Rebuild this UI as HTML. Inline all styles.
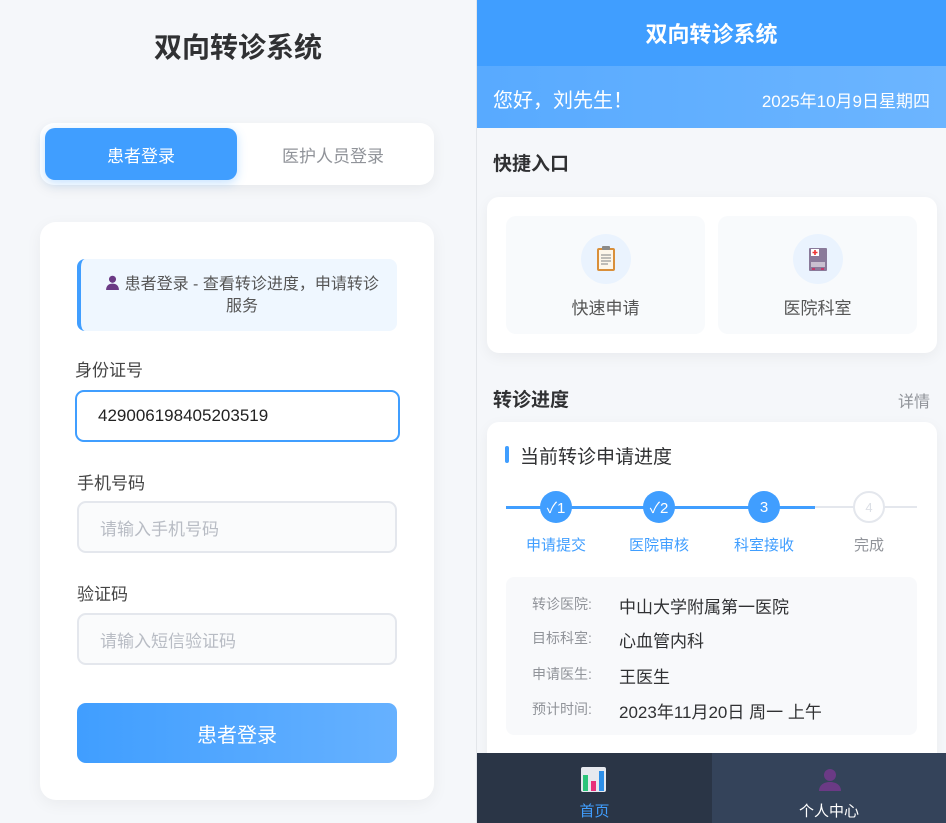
<!DOCTYPE html><html><head><meta charset="utf-8"><style>
*{margin:0;padding:0;box-sizing:border-box}
body{width:946px;height:823px;overflow:hidden;font-family:"Liberation Sans","Noto Sans CJK SC",sans-serif;background:#f5f7fa;position:relative}
.a{position:absolute}
.c{display:flex;align-items:center;justify-content:center}
.inp{position:absolute;left:77px;width:320px;height:52px;border:2px solid #e4e7ed;border-radius:9px;background:#fafbfc;color:#b8bcc4;font-size:17px;padding-left:21px;display:flex;align-items:center}
.lbl{position:absolute;left:75px;font-size:17px;color:#444}
.step{position:absolute;top:491px;width:32px;height:32px;border-radius:50%;background:#409eff;color:#fff;font-size:15px;display:flex;align-items:center;justify-content:center}
.sl{position:absolute;top:534px;width:110px;text-align:center;font-size:15px;color:#409eff}
.rl{position:absolute;left:532px;font-size:14px;color:#909399}
.rv{position:absolute;left:619px;font-size:17px;color:#303133}
</style></head><body>
<div class="a" style="left:0;top:0;width:477px;height:823px;background:#f5f7fa;border-right:1px solid #e3e6ea"></div>
<div class="a" style="left:0;top:26px;width:476px;text-align:center;font-size:28px;font-weight:bold;color:#303133">双向转诊系统</div>
<div class="a" style="left:40px;top:123px;width:394px;height:62px;background:#fff;border-radius:14px;box-shadow:0 4px 14px rgba(0,0,0,.06)"></div>
<div class="a c" style="left:45px;top:128px;width:192px;height:52px;background:#409eff;border-radius:10px;color:#fff;font-size:17px;box-shadow:0 3px 10px rgba(64,158,255,.3)">患者登录</div>
<div class="a c" style="left:237px;top:128px;width:192px;height:52px;color:#909399;font-size:17px">医护人员登录</div>
<div class="a" style="left:40px;top:222px;width:394px;height:578px;background:#fff;border-radius:16px;box-shadow:0 4px 16px rgba(0,0,0,.05)"></div>
<div class="a" style="left:77px;top:259px;width:320px;height:72px;background:#eff7ff;border-left:4px solid #409eff;border-radius:8px;text-align:center;font-size:16px;color:#555;line-height:22px;padding:15px 14px 0 20px">
<svg width="15" height="15" viewBox="0 0 14 14" style="vertical-align:-1px"><circle cx="7" cy="4" r="3.3" fill="#6b3a85"/><path d="M1 14c0-4 2.5-6 6-6s6 2 6 6z" fill="#6b3a85"/></svg> 患者登录 - 查看转诊进度，申请转诊<br>服务</div>
<div class="lbl" style="top:356px">身份证号</div>
<div class="inp" style="left:75px;top:390px;width:325px;border-color:#409eff;background:#fff;color:#222;font-size:17px">429006198405203519</div>
<div class="lbl" style="left:77px;top:469px">手机号码</div>
<div class="inp" style="top:501px">请输入手机号码</div>
<div class="lbl" style="left:77px;top:580px">验证码</div>
<div class="inp" style="top:613px">请输入短信验证码</div>
<div class="a c" style="left:77px;top:703px;width:320px;height:60px;border-radius:9px;background:linear-gradient(90deg,#409eff,#66b1ff);color:#fff;font-size:20px">患者登录</div>

<div class="a c" style="left:477px;top:0;width:469px;height:66px;background:#409eff;color:#fff;font-size:22px;font-weight:bold">双向转诊系统</div>
<div class="a" style="left:477px;top:66px;width:469px;height:62px;background:linear-gradient(90deg,#58aaff,#6cb5ff)"></div>
<div class="a" style="left:493px;top:84px;color:#fff;font-size:20px">您好，刘先生！</div>
<div class="a" style="right:16px;top:87px;color:#fff;font-size:17px">2025年10月9日星期四</div>
<div class="a" style="left:493px;top:149px;font-size:19px;font-weight:bold;color:#303133">快捷入口</div>
<div class="a" style="left:487px;top:197px;width:450px;height:156px;background:#fff;border-radius:12px;box-shadow:0 4px 14px rgba(0,0,0,.05)"></div>
<div class="a" style="left:506px;top:216px;width:199px;height:118px;background:#f8fafc;border-radius:10px"></div>
<div class="a" style="left:718px;top:216px;width:199px;height:118px;background:#f8fafc;border-radius:10px"></div>
<div class="a c" style="left:581px;top:234px;width:50px;height:50px;border-radius:50%;background:#eaf3fe"><svg width="20" height="26" viewBox="0 0 20 26"><rect x="1" y="2" width="18" height="23" rx="2" fill="#d98f3a"/><rect x="3" y="4" width="14" height="19" fill="#fdf6ea"/><rect x="6" y="0" width="8" height="4" rx="1" fill="#8a8a8a"/><path d="M5 9h10M5 12h10M5 15h10M5 18h7" stroke="#999" stroke-width="1.2"/></svg></div>
<div class="a c" style="left:793px;top:234px;width:50px;height:50px;border-radius:50%;background:#eaf3fe"><svg width="20" height="26" viewBox="0 0 20 26"><rect x="1" y="2" width="18" height="23" rx="1" fill="#8a7a9a"/><rect x="3" y="3" width="8" height="7" fill="#fff"/><path d="M7 4v5M4.5 6.5h5" stroke="#e33" stroke-width="1.6"/><rect x="3" y="16" width="14" height="5" fill="#c9c0d0"/><rect x="4" y="22" width="3" height="2" fill="#c23a6a"/><rect x="13" y="22" width="3" height="2" fill="#c23a6a"/></svg></div>
<div class="a" style="left:506px;top:294px;width:199px;text-align:center;font-size:17px;color:#555">快速申请</div>
<div class="a" style="left:718px;top:294px;width:199px;text-align:center;font-size:17px;color:#555">医院科室</div>
<div class="a" style="left:493px;top:385px;font-size:19px;font-weight:bold;color:#303133">转诊进度</div>
<div class="a" style="right:16px;top:388px;font-size:16px;color:#909399">详情</div>
<div class="a" style="left:487px;top:422px;width:450px;height:360px;background:#fff;border-radius:12px;box-shadow:0 4px 14px rgba(0,0,0,.05)"></div>
<div class="a" style="left:505px;top:446px;width:4px;height:17px;background:#409eff;border-radius:2px"></div>
<div class="a" style="left:520px;top:442px;font-size:19px;color:#303133">当前转诊申请进度</div>
<div class="a" style="left:506px;top:506px;width:411px;height:2px;background:#e4e7ed"></div>
<div class="a" style="left:506px;top:506px;width:309px;height:3px;background:#409eff"></div>
<div class="step" style="left:540px">✓1</div><div class="step" style="left:643px">✓2</div><div class="step" style="left:748px">3</div>
<div class="step" style="left:853px;background:#fff;border:2px solid #e4e7ed;color:#dcdfe6;font-size:13px">4</div>
<div class="sl" style="left:501px">申请提交</div><div class="sl" style="left:604px">医院审核</div><div class="sl" style="left:709px">科室接收</div><div class="sl" style="left:814px;color:#909399">完成</div>
<div class="a" style="left:506px;top:577px;width:411px;height:158px;background:#f8f9fb;border-radius:8px"></div>
<div class="rl" style="top:594px">转诊医院:</div><div class="rv" style="top:593px">中山大学附属第一医院</div>
<div class="rl" style="top:628px">目标科室:</div><div class="rv" style="top:627px">心血管内科</div>
<div class="rl" style="top:664px">申请医生:</div><div class="rv" style="top:663px">王医生</div>
<div class="rl" style="top:699px">预计时间:</div><div class="rv" style="top:698px">2023年11月20日 周一 上午</div>
<div class="a" style="left:477px;top:753px;width:235px;height:70px;background:#2a3546"></div>
<div class="a" style="left:712px;top:753px;width:234px;height:70px;background:#34435a"></div>
<div class="a" style="left:581px;top:767px"><svg width="25" height="25" viewBox="0 0 25 25"><rect width="25" height="25" rx="2" fill="#e6e9ef"/><rect x="2" y="8" width="5" height="16" fill="#2bc47a"/><rect x="10" y="14" width="5" height="10" fill="#e8307a"/><rect x="18" y="4" width="5" height="20" fill="#2d8fe8"/></svg></div>
<div class="a" style="left:477px;top:800px;width:235px;text-align:center;color:#409eff;font-size:15px">首页</div>
<div class="a" style="left:818px;top:767px"><svg width="24" height="24" viewBox="0 0 24 24"><circle cx="12" cy="8" r="6" fill="#6b3a85"/><path d="M1 24c0-6 5-9 11-9s11 3 11 9z" fill="#6b3a85"/></svg></div>
<div class="a" style="left:712px;top:800px;width:234px;text-align:center;color:#fff;font-size:15px">个人中心</div>
</body></html>
